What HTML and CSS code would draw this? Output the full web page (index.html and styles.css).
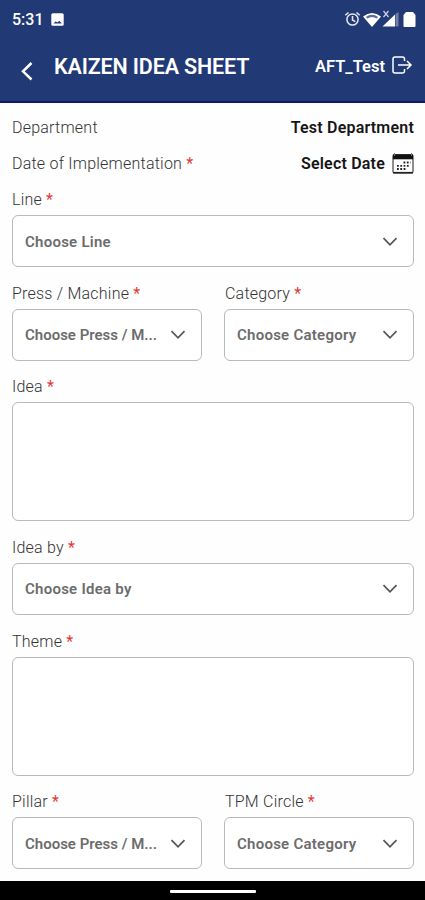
FILE: index.html
```
<!DOCTYPE html>
<html lang="en">
<head>
<meta charset="utf-8">
<title>Kaizen Idea Sheet</title>
<link rel="stylesheet" href="styles.css">
</head>
<body>
<svg class="defs" width="0" height="0"><symbol id="chev" viewBox="0 0 16 10"><path d="M1.500 1.200 8 7.800l6.500-6.600" fill="none" stroke="currentColor" stroke-width="1.700"/></symbol></svg>
<header>
  <div class="status">
    <span class="time">5:31</span>
    <svg class="photo" width="13" height="13" viewBox="0 0 13 13"><rect x=".3" y=".3" width="12.400" height="12.400" rx="1.500" fill="#fff"/><path d="M2.500 10.500 4.800 8.300 6.300 9.500 8.300 7.800 10.800 10.500z" fill="#213a75"/></svg>
    <svg class="sys" width="72" height="18" viewBox="0 0 72 18">
      <g fill="none" stroke="#e6e9f1" stroke-width="1.500"><circle cx="8.500" cy="9.500" r="5.600"/><path d="M8.500 6v4l2.800 1.600M1.300 5.300 4.500 2.500M15.700 5.300 12.500 2.500"/></g>
      <path d="M19 6.500Q28-.5 37 6.500L28 17z" fill="#fff"/><path d="M21.800 7Q28 2.500 34.200 7L32.500 8.500Q28 5.500 23.500 8.500z" fill="#5c6d9a"/>
      <path d="M38.500 16.500 51 4.500v12z" fill="#fff"/><path d="M51.500 4 54.500 2v14.500h-3z" fill="#7180a8"/><path d="m39.500 1 5 6m0-6-5 6" stroke="#cdd3e3" stroke-width="1.200"/>
      <path d="m62 2h7l2.500 3v11a1 1 0 0 1-1 1H60.500a1 1 0 0 1-1-1V5z" fill="#fff"/>
    </svg>
  </div>
  <div class="bar">
    <svg class="back" width="14" height="20" viewBox="0 0 14 20"><path d="M11.500 2 3 10.300l8.500 8.200" fill="none" stroke="#fff" stroke-width="2.500"/></svg>
    <h1>KAIZEN IDEA SHEET</h1>
    <span class="user">AFT_Test</span>
    <svg class="exit" width="21" height="18" viewBox="0 0 21 18"><path d="M12.500 5V3a2 2 0 0 0-2-2H3a2 2 0 0 0-2 2v12a2 2 0 0 0 2 2h7.500a2 2 0 0 0 2-2v-2M6 9h13M15 5l4 4-4 4" fill="none" stroke="#fff" stroke-width="1.500"/></svg>
  </div>
</header>
<main>
  <div class="row"><span class="label">Department</span><b>Test Department</b></div>
  <div class="row"><span class="label">Date of Implementation <i>*</i></span><b>Select Date</b>
    <svg class="cal" width="22" height="21" viewBox="0 0 22 21"><rect x="1" y="1.500" width="20" height="18.500" rx="1.500" fill="#fff" stroke="#444" stroke-width="1.200"/><path d="M1 1.500h20v4.800H1z" fill="#111"/><path d="M1 19.700h20" stroke="#222" stroke-width="1.600"/><path d="M2.500 0v3M19.500 0v3" stroke="#777"/><path d="M11.500 9.500h7M5 12.800h13M5 16h10" stroke="#222" stroke-width="1.800" stroke-dasharray="1.800 1.500"/></svg>
  </div>
  <div class="field"><span class="label">Line <i>*</i></span><div class="select"><span>Choose Line</span><svg class="chev"><use href="#chev"/></svg></div></div>
  <div class="pair">
    <div class="field"><span class="label">Press / Machine <i>*</i></span><div class="select"><span class="tight">Choose Press / M...</span><svg class="chev"><use href="#chev"/></svg></div></div>
    <div class="field"><span class="label">Category <i>*</i></span><div class="select"><span>Choose Category</span><svg class="chev"><use href="#chev"/></svg></div></div>
  </div>
  <div class="field"><span class="label">Idea <i>*</i></span><div class="area"></div></div>
  <div class="field"><span class="label">Idea by <i>*</i></span><div class="select"><span>Choose Idea by</span><svg class="chev"><use href="#chev"/></svg></div></div>
  <div class="field"><span class="label">Theme <i>*</i></span><div class="area"></div></div>
  <div class="pair">
    <div class="field"><span class="label">Pillar <i>*</i></span><div class="select"><span class="tight">Choose Press / M...</span><svg class="chev"><use href="#chev"/></svg></div></div>
    <div class="field"><span class="label">TPM Circle <i>*</i></span><div class="select"><span>Choose Category</span><svg class="chev"><use href="#chev"/></svg></div></div>
  </div>
</main>
<footer><div class="pill"></div></footer>
</body>
</html>
```
FILE: styles.css
```
* { box-sizing: border-box; }
body { margin: 0; width: 425px; height: 900px; overflow: hidden; display: flex; flex-direction: column; background: #fefefe; font-family: Roboto, sans-serif; }
svg { display: block; flex: none; }
.defs { position: absolute; }
header { height: 103px; flex: none; background: #213a75; border-bottom: 2px solid #10166b; color: #fff; }
.status { height: 38px; display: flex; align-items: center; padding: 0 9px 0 12px; }
.time { font-size: 16px; font-weight: 500; line-height: 20px; margin-top: 2px; }
.photo { margin-left: 7px; }
.sys { margin-left: auto; }
.bar { height: 56px; display: flex; align-items: center; padding: 0 12px 0 20px; }
.back { margin-top: 9px; }
h1 { margin: 2px 0 0 20px; font-size: 21.500px; font-weight: 600; line-height: 26px; letter-spacing: -.15px; white-space: nowrap; }
.user { margin-left: auto; font-size: 16.500px; font-weight: 600; letter-spacing: 0; }
.exit { margin-left: 7px; margin-top: -2px; }
main { flex: 1; padding: 6px 11px 0 12px; }
.row { height: 36px; display: flex; align-items: center; }
.row b { margin-left: auto; font-size: 16px; font-weight: 600; letter-spacing: .2px; color: #161616; }
.cal { margin-left: 7px; }
.label { display: block; height: 32px; line-height: 34px; font-size: 16px; font-weight: 300; letter-spacing: .22px; color: #333; white-space: nowrap; }
.label i { font-style: normal; font-weight: 400; color: #e53935; }
.field { margin-bottom: 9.600px; }
.pair { display: grid; grid-template-columns: 190px 190px; justify-content: space-between; }
.pair .field:last-child .label { padding-left: 1px; }
.row + .field { margin-top: 2px; }
.select { height: 52px; display: flex; align-items: center; justify-content: space-between; padding: 1px 15.500px 0 12px; border: 1px solid #b9b9b9; border-radius: 6px; background: #fff; color: #6c6c6c; font-size: 15px; font-weight: 600; letter-spacing: .25px; white-space: nowrap; }
.tight { letter-spacing: 0; }
.chev { width: 16px; height: 10px; color: #555; }
.area { height: 119.200px; border: 1px solid #b9b9b9; border-radius: 6px; background: #fff; }
footer { height: 19px; flex: none; background: #000; padding-top: 9px; }
.pill { width: 86px; height: 3px; margin: 0 auto; border-radius: 1px; background: #fff; }
```
